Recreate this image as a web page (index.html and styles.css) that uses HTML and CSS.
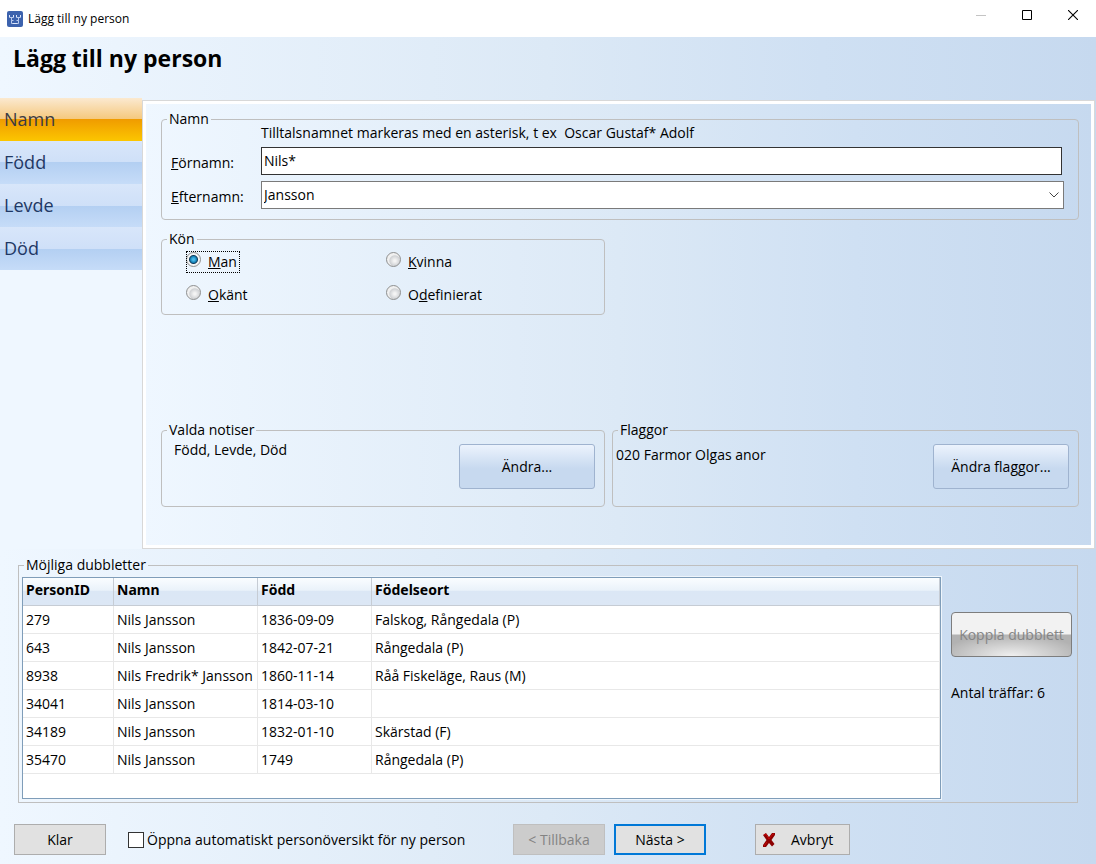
FILE: index.html
```html
<!DOCTYPE html>
<html lang="sv">
<head>
<meta charset="utf-8">
<title>Lägg till ny person</title>
<link rel="stylesheet" href="styles.css">
</head>
<body>
<header class="titlebar">
  <svg class="app-icon" viewBox="0 0 16 16" aria-hidden="true">
    <rect width="16" height="16" rx="2" fill="#3c62ad"/>
    <g fill="none" stroke="#b9caec" stroke-width="1">
      <path d="M2.500 5v1.500h4V5M4.500 6.500v3h2M9.500 5v1.500h4V5M11.500 6.500v3h-2"/>
      <path d="M4.500 9.500v3h7v-3"/>
    </g>
    <g fill="#dbe6fa"><rect x="2" y="4" width="1" height="2"/><rect x="6" y="4" width="1" height="2"/><rect x="9" y="4" width="1" height="2"/><rect x="13" y="4" width="1" height="2"/><rect x="6" y="12" width="4" height="1"/></g>
  </svg>
  <span class="titlebar-text">Lägg till ny person</span>
  <div class="window-buttons">
    <button class="window-button" disabled aria-label="Minimera"><svg width="10" height="10" viewBox="0 0 10 10"><path d="M0 5.500h10" stroke="#c4c4c4"/></svg></button>
    <button class="window-button" aria-label="Maximera"><svg width="10" height="10" viewBox="0 0 10 10"><path d="M.5.5h9v9h-9z" fill="none" stroke="#000"/></svg></button>
    <button class="window-button" aria-label="Stäng"><svg width="10" height="10" viewBox="0 0 10 10"><path d="M0 0l10 10M10 0L0 10" stroke="#000" stroke-width="1.100"/></svg></button>
  </div>
</header>
<h1 class="heading">Lägg till ny person</h1>
<div class="middle">
  <nav class="steps">
    <a class="step step-active" href="#namn">Namn</a>
    <a class="step" href="#fodd">Född</a>
    <a class="step" href="#levde">Levde</a>
    <a class="step" href="#dod">Död</a>
  </nav>
  <main class="panel">
    <fieldset class="group">
      <legend>Namn</legend>
      <div class="name-fields">
        <p class="hint">Tilltalsnamnet markeras med en asterisk, t ex&nbsp; Oscar Gustaf* Adolf</p>
        <label class="field-label" for="fornamn"><u>F</u>örnamn:</label>
        <input class="text-field" id="fornamn" type="text" value="Nils*">
        <label class="field-label" for="efternamn"><u>E</u>fternamn:</label>
        <div class="select-wrap">
          <select class="select-field" id="efternamn"><option>Jansson</option></select>
          <svg class="chevron" width="10" height="6" viewBox="0 0 10 6"><path d="M.5.5L5 5 9.500.5" fill="none" stroke="#444"/></svg>
        </div>
      </div>
    </fieldset>
    <div class="pair">
      <fieldset class="group">
        <legend>Kön</legend>
        <div class="gender-options">
          <label class="radio focused"><input type="radio" name="kon" checked><span><u>M</u>an</span></label>
          <label class="radio"><input type="radio" name="kon"><span><u>K</u>vinna</span></label>
          <label class="radio"><input type="radio" name="kon"><span><u>O</u>känt</span></label>
          <label class="radio"><input type="radio" name="kon"><span>O<u>d</u>efinierat</span></label>
        </div>
      </fieldset>
    </div>
    <div class="pair pair-bottom">
      <fieldset class="group">
        <legend>Valda notiser</legend>
        <div class="group-row">
          <span class="notes-text">Född, Levde, Död</span>
          <button class="soft-button">Ändra...</button>
        </div>
      </fieldset>
      <fieldset class="group">
        <legend>Flaggor</legend>
        <div class="group-row">
          <span class="flags-text">020 Farmor Olgas anor</span>
          <button class="soft-button">Ändra flaggor...</button>
        </div>
      </fieldset>
    </div>
  </main>
</div>
<fieldset class="group duplicates">
  <legend>Möjliga dubbletter</legend>
  <div class="duplicates-row">
    <div class="table-box">
      <table class="table">
        <colgroup><col class="col-id"><col class="col-name"><col class="col-born"><col></colgroup>
        <thead><tr><th>PersonID</th><th>Namn</th><th>Född</th><th>Födelseort</th></tr></thead>
        <tbody>
          <tr><td>279</td><td>Nils Jansson</td><td>1836-09-09</td><td>Falskog, Rångedala (P)</td></tr>
          <tr><td>643</td><td>Nils Jansson</td><td>1842-07-21</td><td>Rångedala (P)</td></tr>
          <tr><td>8938</td><td>Nils Fredrik* Jansson</td><td>1860-11-14</td><td>Råå Fiskeläge, Raus (M)</td></tr>
          <tr><td>34041</td><td>Nils Jansson</td><td>1814-03-10</td><td></td></tr>
          <tr><td>34189</td><td>Nils Jansson</td><td>1832-01-10</td><td>Skärstad (F)</td></tr>
          <tr><td>35470</td><td>Nils Jansson</td><td>1749</td><td>Rångedala (P)</td></tr>
        </tbody>
      </table>
    </div>
    <div class="duplicates-side">
      <button class="link-button" disabled>Koppla dubblett</button>
      <span>Antal träffar: 6</span>
    </div>
  </div>
</fieldset>
<footer class="footer">
  <button class="button">Klar</button>
  <label class="check"><input type="checkbox"><span>Öppna automatiskt personöversikt för ny person</span></label>
  <button class="button button-back" disabled>&lt; Tillbaka</button>
  <button class="button button-default">Nästa &gt;</button>
  <button class="button button-cancel"><svg width="14" height="16" viewBox="0 0 14 16"><path d="M1 3l3-2 3 4 3-4h3v2L9.500 8l3 4-2.500 2.500L7 11l-3 4H1v-2l3.500-5z" fill="#8c0000"/><path d="M2 3l2-1 3 5 4-5h1M2 14l3-4" fill="none" stroke="#c80808"/></svg><span>Avbryt</span></button>
</footer>
</body>
</html>
```

FILE: styles.css
```css
* { box-sizing: border-box; }

body {
  margin: 0;
  min-height: 100vh;
  display: flex;
  flex-direction: column;
  font: 14px/20px "Open Sans", "Noto Sans", sans-serif;
  color: #000;
  background: linear-gradient(90deg, #eff7ff, #dce9f6 50%, #cfe0f3 75%, #c6d9ef);
}

button, input, select { font: inherit; color: inherit; margin: 0; }
button { padding: 0; }

.titlebar {
  display: flex;
  align-items: center;
  height: 37px;
  padding-left: 7px;
  background: #fff;
}
.app-icon { width: 16px; height: 16px; }
.titlebar-text { margin-left: 5px; font-size: 12px; }
.window-buttons { display: flex; margin-left: auto; align-self: flex-start; }
.window-button {
  display: flex;
  align-items: center;
  justify-content: center;
  width: 46px;
  height: 30px;
  border: 0;
  background: none;
}

.heading {
  margin: 0;
  height: 61px;
  padding: 5px 13px;
  font-size: 23px;
  line-height: 32px;
  font-weight: 700;
}

.middle { display: flex; flex: 1; }
.steps { flex: none; width: 142px; background: #eff7ff; }
.step {
  display: block;
  height: 43px;
  padding-left: 4px;
  font-size: 18px;
  line-height: 43px;
  color: #1f3864;
  text-decoration: none;
  background: linear-gradient(#d8e6fa, #cfe0f8 50%, #b3cff2 50%, #c6dcf8);
}
.step-active {
  color: #3b3b44;
  background: linear-gradient(#fbe9d0, #f5c87c 50%, #f09c00 50%, #fcc600);
}

.panel {
  flex: 1;
  display: flex;
  flex-direction: column;
  margin: 2px 1px 0 0;
  padding: 10px 15px 41px 18px;
  border: 1px solid #d8d8d8;
  outline: 3px solid #fff;
  outline-offset: -4px;
  background: linear-gradient(90deg, #eff7ff, #dce9f6 50%, #cfe0f3 75%, #c6d9ef);
}

.group {
  min-width: 0;
  margin: 0;
  padding: 0;
  border: 1px solid #bfbfbf;
  border-radius: 4px;
}
.group legend { margin-left: 5px; padding: 0 2px; line-height: 16px; }

.name-fields {
  display: grid;
  grid-template-columns: 90px 1fr;
  row-gap: 6px;
  padding: 0 14px 10px 9px;
}
.hint { grid-column: 2; margin: -2px 0 0; line-height: 16px; }
.field-label { padding-top: 6px; }
.text-field {
  width: calc(100% - 2px);
  height: 28px;
  padding: 0 2px 2px;
  border: 1px solid #333;
  border-radius: 0;
  background: #fff;
}
.select-wrap { position: relative; }
.select-field {
  display: block;
  width: 100%;
  height: 28px;
  padding: 0 2px;
  border: 1px solid #7a7a7a;
  border-radius: 0;
  appearance: none;
  background: #fff;
}
.chevron { position: absolute; right: 5px; top: 11px; pointer-events: none; }

.pair { display: grid; grid-template-columns: 444fr 467fr; gap: 7px; margin-top: 11px; }
.pair-bottom { margin-top: auto; }

.gender-options {
  display: grid;
  grid-template-columns: 200px 1fr;
  row-gap: 11px;
  justify-items: start;
  padding: 4px 8px 8px 24px;
}
.radio { display: flex; height: 22px; padding-right: 3px; gap: 7px; line-height: 22px; }
.focused { outline: 1px dotted #000; outline-offset: -1px; }
.radio input {
  appearance: none;
  width: 15px;
  height: 15px;
  margin-top: 1px;
  border: 1px solid #8e8f8f;
  border-radius: 50%;
  background: radial-gradient(circle at 60% 60%, #f4f4f4 0 1px, #d0d2d5 5px, #f0f0f0 6px);
}
.radio input:checked {
  background: radial-gradient(circle, #49b9e8 0 1px, #1583b8 3px, #123c5c 4px, #f4f4f4 5px);
}

.group-row {
  display: flex;
  justify-content: space-between;
  align-items: flex-start;
  padding: 6px 9px 17px 3px;
}
.notes-text { padding-left: 9px; margin-top: -4px; }
.flags-text { margin-top: 1px; }
.soft-button {
  width: 136px;
  height: 45px;
  border: 1px solid #9fb3cf;
  border-radius: 3px;
  background: linear-gradient(#ecf3fd, #c7d9ef 55%, #c7d9ef);
}

.duplicates { margin: 8px 18px 0; border-radius: 0; }
.duplicates-row { display: flex; padding: 4px 5px 3px 3px; }
.table-box {
  flex: 1;
  padding-bottom: 24px;
  border: 1px solid #7f9db9;
  outline: 1px solid #eef5fc;
  background: #fff;
}
.table { width: 100%; table-layout: fixed; border-collapse: separate; border-spacing: 0; }
.col-id { width: 91px; }
.col-name { width: 144px; }
.col-born { width: 114px; }
.table th, .table td {
  height: 28px;
  padding: 0 0 0 3px;
  text-align: left;
  white-space: nowrap;
  border-right: 1px solid #e8e8e8;
  border-bottom: 1px solid #e8e8e8;
}
.table th {
  padding-bottom: 3px;
  font: 700 14px/20px "Noto Sans", sans-serif;
  border-color: #c6ccd4;
  background: linear-gradient(#fafdff, #eaf2fa 45%, #dbe7f5 50%, #dce7f5);
}
.duplicates-side {
  flex: none;
  width: 131px;
  display: flex;
  flex-direction: column;
  gap: 26px;
  padding: 35px 0 0 10px;
}
.link-button {
  height: 45px;
  border: 1px solid #7d7d7d;
  border-radius: 4px;
  color: #858585;
  white-space: nowrap;
  background:
    linear-gradient(#f2f2f2, #f2f2f2) top / 100% 50% no-repeat,
    radial-gradient(ellipse 60% 50% at 50% 100%, #f0f0f0, #b2b2b2);
}

.footer { display: flex; align-items: center; padding: 21px 14px 9px; }
.button {
  width: 92px;
  height: 31px;
  border: 1px solid #adadad;
  background: #e1e1e1;
}
.check { display: flex; align-items: center; gap: 3px; margin-left: 22px; width: 385px; }
.check input {
  appearance: none;
  width: 16px;
  height: 16px;
  border: 1px solid #333;
  background: #fff;
}
.button-back { color: #838383; background: #ccc; border-color: #bfbfbf; }
.button-default { margin-left: 9px; border: 2px solid #0078d7; }
.button-cancel {
  display: flex;
  align-items: center;
  gap: 15px;
  width: 95px;
  margin-left: 49px;
  padding-left: 6px;
}
```
